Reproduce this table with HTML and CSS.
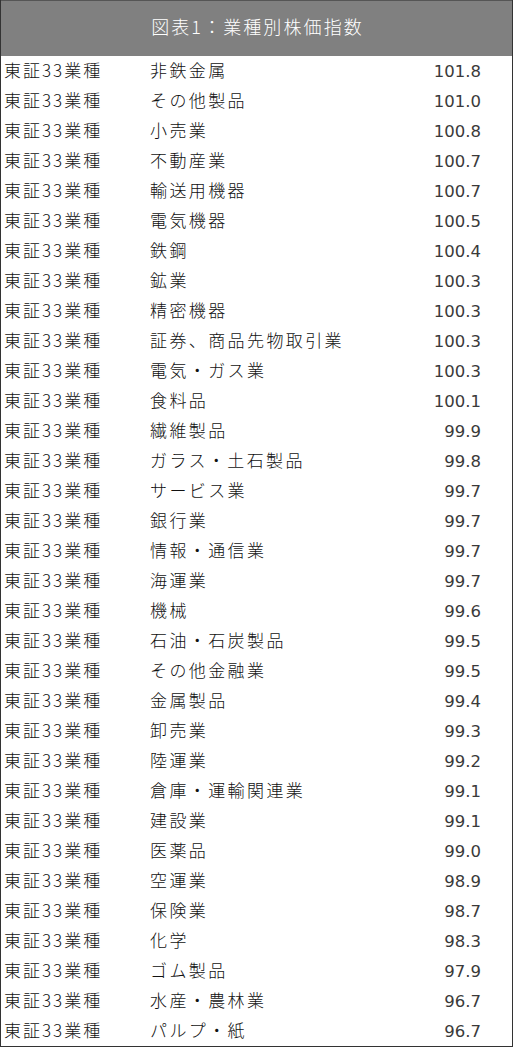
FILE: index.html
```html
<!DOCTYPE html>
<html lang="ja">
<head>
<meta charset="utf-8">
<link rel="stylesheet" href="styles.css">
</head>
<body>
<div class="table">
  <div class="title">図表1：業種別株価指数</div>
  <div class="rows">
    <div class="row"><span class="c1">東証33業種</span><span class="c2">非鉄金属</span><span class="c3">101.8</span></div>
    <div class="row"><span class="c1">東証33業種</span><span class="c2">その他製品</span><span class="c3">101.0</span></div>
    <div class="row"><span class="c1">東証33業種</span><span class="c2">小売業</span><span class="c3">100.8</span></div>
    <div class="row"><span class="c1">東証33業種</span><span class="c2">不動産業</span><span class="c3">100.7</span></div>
    <div class="row"><span class="c1">東証33業種</span><span class="c2">輸送用機器</span><span class="c3">100.7</span></div>
    <div class="row"><span class="c1">東証33業種</span><span class="c2">電気機器</span><span class="c3">100.5</span></div>
    <div class="row"><span class="c1">東証33業種</span><span class="c2">鉄鋼</span><span class="c3">100.4</span></div>
    <div class="row"><span class="c1">東証33業種</span><span class="c2">鉱業</span><span class="c3">100.3</span></div>
    <div class="row"><span class="c1">東証33業種</span><span class="c2">精密機器</span><span class="c3">100.3</span></div>
    <div class="row"><span class="c1">東証33業種</span><span class="c2">証券、商品先物取引業</span><span class="c3">100.3</span></div>
    <div class="row"><span class="c1">東証33業種</span><span class="c2">電気・ガス業</span><span class="c3">100.3</span></div>
    <div class="row"><span class="c1">東証33業種</span><span class="c2">食料品</span><span class="c3">100.1</span></div>
    <div class="row"><span class="c1">東証33業種</span><span class="c2">繊維製品</span><span class="c3">99.9</span></div>
    <div class="row"><span class="c1">東証33業種</span><span class="c2">ガラス・土石製品</span><span class="c3">99.8</span></div>
    <div class="row"><span class="c1">東証33業種</span><span class="c2">サービス業</span><span class="c3">99.7</span></div>
    <div class="row"><span class="c1">東証33業種</span><span class="c2">銀行業</span><span class="c3">99.7</span></div>
    <div class="row"><span class="c1">東証33業種</span><span class="c2">情報・通信業</span><span class="c3">99.7</span></div>
    <div class="row"><span class="c1">東証33業種</span><span class="c2">海運業</span><span class="c3">99.7</span></div>
    <div class="row"><span class="c1">東証33業種</span><span class="c2">機械</span><span class="c3">99.6</span></div>
    <div class="row"><span class="c1">東証33業種</span><span class="c2">石油・石炭製品</span><span class="c3">99.5</span></div>
    <div class="row"><span class="c1">東証33業種</span><span class="c2">その他金融業</span><span class="c3">99.5</span></div>
    <div class="row"><span class="c1">東証33業種</span><span class="c2">金属製品</span><span class="c3">99.4</span></div>
    <div class="row"><span class="c1">東証33業種</span><span class="c2">卸売業</span><span class="c3">99.3</span></div>
    <div class="row"><span class="c1">東証33業種</span><span class="c2">陸運業</span><span class="c3">99.2</span></div>
    <div class="row"><span class="c1">東証33業種</span><span class="c2">倉庫・運輸関連業</span><span class="c3">99.1</span></div>
    <div class="row"><span class="c1">東証33業種</span><span class="c2">建設業</span><span class="c3">99.1</span></div>
    <div class="row"><span class="c1">東証33業種</span><span class="c2">医薬品</span><span class="c3">99.0</span></div>
    <div class="row"><span class="c1">東証33業種</span><span class="c2">空運業</span><span class="c3">98.9</span></div>
    <div class="row"><span class="c1">東証33業種</span><span class="c2">保険業</span><span class="c3">98.7</span></div>
    <div class="row"><span class="c1">東証33業種</span><span class="c2">化学</span><span class="c3">98.3</span></div>
    <div class="row"><span class="c1">東証33業種</span><span class="c2">ゴム製品</span><span class="c3">97.9</span></div>
    <div class="row"><span class="c1">東証33業種</span><span class="c2">水産・農林業</span><span class="c3">96.7</span></div>
    <div class="row"><span class="c1">東証33業種</span><span class="c2">パルプ・紙</span><span class="c3">96.7</span></div>
  </div>
</div>
</body>
</html>
```
FILE: styles.css
```css
html, body {
  margin: 0;
  padding: 0;
  background: #ffffff;
}
body {
  font-family: "Noto Sans CJK JP", "Noto Sans", sans-serif;
  color: #111111;
}
.table {
  width: 513px;
  box-sizing: border-box;
  border: 1px solid #333333;
  border-top: 0;
}
.title {
  height: 56px;
  background: #808080;
  color: #ffffff;
  font-size: 18px;
  font-weight: 300;
  letter-spacing: 2.1px;
  padding-left: 2px;
  padding-bottom: 5px;
  display: flex;
  align-items: center;
  justify-content: center;
  border-top: 1px solid #555555;
  box-sizing: border-box;
}
.rows {
  display: flex;
  flex-direction: column;
}
.row {
  height: 30px;
  box-sizing: border-box;
  display: flex;
  align-items: baseline;
  font-size: 17px;
  line-height: 27px;
}
.c1 {
  width: 146px;
  padding-left: 3px;
  flex: none;
  letter-spacing: 2px;
  font-weight: 300;
}
.c2 {
  flex: 1;
  letter-spacing: 2.4px;
  font-weight: 300;
}
.c3 {
  width: 80px;
  text-align: right;
  padding-right: 31px;
  flex: none;
  font-family: "DejaVu Sans", "Noto Sans", sans-serif;
  font-size: 16.5px;
  color: #3a3a3a;
}
```
